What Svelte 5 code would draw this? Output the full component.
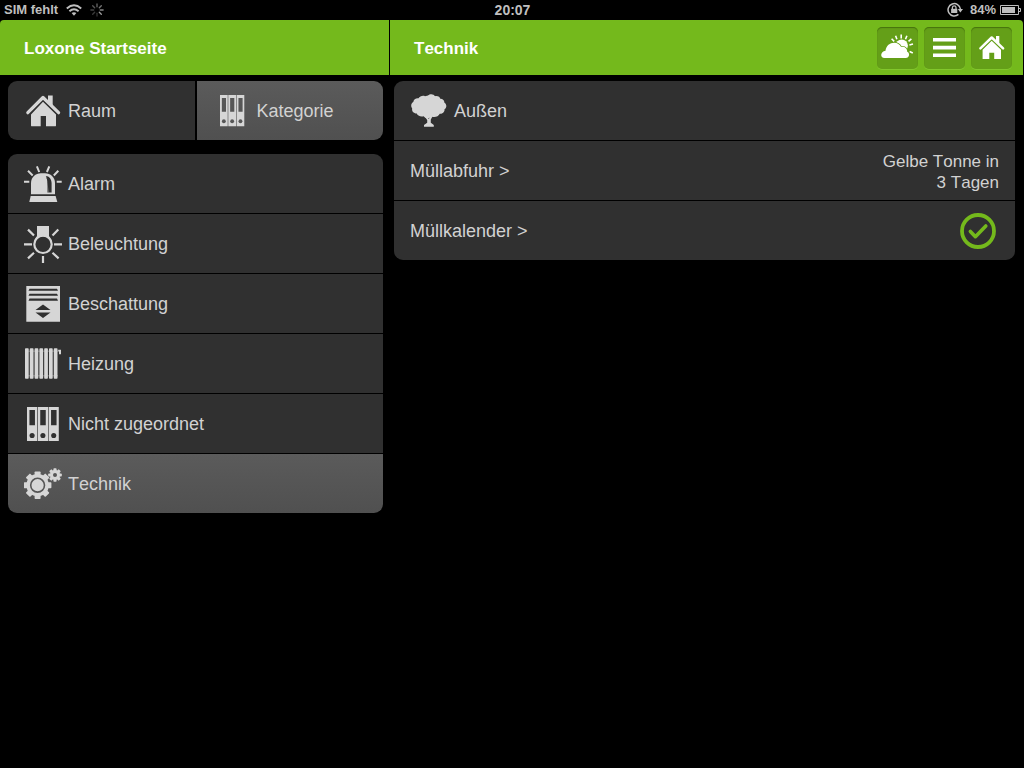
<script>
  /**
   * @typedef {{ id: string, label: string, icon: string }} Entry
   */

  /** @type {Entry[]} */
  const tabs = [
    { id: "room", label: "Raum", icon: "house" },
    { id: "category", label: "Kategorie", icon: "folders" },
  ];

  /** @type {Entry[]} */
  const categories = [
    { id: "alarm", label: "Alarm", icon: "alarm" },
    { id: "light", label: "Beleuchtung", icon: "bulb" },
    { id: "shade", label: "Beschattung", icon: "shade" },
    { id: "heating", label: "Heizung", icon: "radiator" },
    { id: "none", label: "Nicht zugeordnet", icon: "binders" },
    { id: "tech", label: "Technik", icon: "gears" },
  ];

  const teeth = [0, 45, 90, 135, 180, 225, 270, 315];
  const spokes = [0.5, 0.6, 0.7, 0.8, 0.25, 0.3, 0.35, 0.45];

  let activeTab = $state("category");
  let activeCategory = $state("tech");

  const title = $derived(categories.find((c) => c.id === activeCategory)?.label);
</script>

{#snippet binderRow(pitch, w, h)}
  {#each [0, 1, 2] as i (i)}
    <g transform="translate({i * pitch} 0)">
      <path
        fill-rule="evenodd"
        d="M0 0H{w}V{h}H0ZM{w * 0.24} 3V{h * 0.54}H{w * 0.78}V3Z"
      />
      <circle class="cut" cx={w / 2} cy={h * 0.84} r={w * 0.25} />
    </g>
  {/each}
{/snippet}

{#snippet gear(cx, cy, body, tip, width)}
  <circle {cx} {cy} r={body} />
  {#each teeth as a (a)}
    <rect
      x={cx - width / 2}
      y={cy - tip}
      {width}
      height={tip}
      rx="0.8"
      transform="rotate({a} {cx} {cy})"
    />
  {/each}
{/snippet}

{#snippet icon(name)}
  <svg class="icon" viewBox="0 0 38 39" aria-hidden="true">
    {#if name === "house"}
      <path d="M24 4.5H28.7V15L24 10.5Z" />
      <path d="M19 10.8L32 23.5V34.4Q32 35.3 31 35.3H22V25H16.7V35.3H8Q7 35.3 7 34.4V23.5Z" />
      <path class="cut-line" d="M3.5 23.9L19 8.6L34.7 23.9" stroke-width="1.8" />
      <path class="line" d="M3.8 21.7L19 6.5L34.6 21.7" stroke-width="3.2" />
    {:else if name === "folders"}
      <g transform="translate(7 4)">{@render binderRow(8.3, 7.7, 31.2)}</g>
    {:else if name === "binders"}
      <g transform="translate(3 3)">{@render binderRow(10.8, 10.2, 34)}</g>
    {:else if name === "alarm"}
      <path d="M7 30.3V19C7 13.5 11.5 9.3 17 9.3H21C26.5 9.3 31 13.5 31 19V30.3Z" />
      <path class="cut" d="M21.8 12C25.2 12.2 27.4 14.8 27.6 19V28.6H24.6L23.2 14.4Z" />
      <path class="edge" d="M22.6 13.6C23.7 15.4 24 17 24 19V28.6" />
      <path d="M6.7 32H31.6L33.3 38H5.3Z" />
      <path
        class="line flat"
        stroke-width="2"
        d="M12.9 2.3L15.2 8M25.3 2.3L22.9 8M4 6.8L8.7 11.5M34.3 6.8L29.8 11.5M0 17.7H5.3M32.7 17.7H37.7"
      />
    {:else if name === "bulb"}
      <path d="M13 2H25V12L27 16H11L13 12Z" />
      <circle class="cut" cx="19" cy="20.3" r="8" />
      <circle class="line" cx="19" cy="20.3" r="8.7" stroke-width="2.2" />
      <path
        class="line flat"
        stroke-width="2.2"
        d="M0 20.3H8M30 20.3H38M4 5.6L10 11.5M34.3 5.6L28.5 11.5M4 34.4L10 28.7M34.6 34.4L28.5 28.7M19 32V39"
      />
    {:else if name === "shade"}
      <path d="M2.3 2H36V37.7H2.3Z" />
      <path
        class="cut"
        d="M5.5 4.8H33L34 6.8H4.5ZM5.5 9.8H33L34 11.8H4.5ZM5.5 14.6H33L34 16.8H4.5ZM19 20.5L26.5 26H11.5ZM11.5 28.5H26.5L19 34Z"
      />
    {:else if name === "radiator"}
      <path d="M2 6.5H34V8H2ZM2 31H34V32.5H2Z" opacity="0.3" />
      {#each [0, 1, 2, 3, 4, 5, 6] as i (i)}
        <rect x={1 + i * 4.8} y="4.3" width="3.7" height="30.4" rx="0.8" />
      {/each}
      <path d="M34.2 5.7H37V10.3H35V7.5H34.2Z" />
    {:else if name === "gears"}
      {@render gear(13.6, 21.2, 11.2, 13.8, 6)}
      <circle class="cut-line" cx="13.6" cy="21.2" r="6.9" stroke-width="1.6" />
      {@render gear(31, 11, 5, 6.8, 3.2)}
      <circle class="cut" cx="31" cy="11" r="2" />
    {:else if name === "tree"}
      <path
        d="M18 4.5C20 2.4 24 3 25 5.2C28 4.6 30 6.2 30.3 7.7C33 7.8 34.5 9.5 34.3 11.4C37.2 13.2 36.8 17 34.5 18.2C35 21 32 23.3 29.8 22.8C28.5 25.6 24.5 26.8 21.8 25.5C19.5 27.7 15.2 27.6 13.6 25.2C10.5 26 7.4 24.6 6.8 22.5C3.5 22.3 1.5 20 2.2 17.4C.6 15.3 1 12 3.3 11C3.5 8.3 6 6.8 8.6 7.2C9.6 5.2 13 4 15 5.2Z"
      />
      <path d="M15 26H17.5L18.8 28L20.5 25H22.8L20.8 28.5V31.8L23.8 34V35.8H14V34L17.2 31.8V29Z" />
    {/if}
  </svg>
{/snippet}

{#snippet row(item, active, onclick)}
  <button type="button" class="row" class:active aria-pressed={active} {onclick}>
    {@render icon(item.icon)}
    <span class="name">{item.label}</span>
  </button>
{/snippet}

<div class="app">
  <div class="status">
    <div class="status-side">
      <span>SIM fehlt</span>
      <svg class="wifi" viewBox="0 0 16 12" aria-hidden="true">
        <path d="M8 11.7L5.6 9.1C7 7.9 9 7.9 10.4 9.1Z" />
        <path class="line flat" stroke-width="2" d="M3.4 7.2Q8 3.2 12.6 7.2M.8 4.4Q8 -1.9 15.2 4.4" />
      </svg>
      <svg class="spinner" viewBox="0 0 14 14" aria-hidden="true">
        {#each spokes as opacity, i (i)}
          <path class="line" stroke-width="1.4" d="M7 .9V3.7" {opacity} transform="rotate({i * 45} 7 7)" />
        {/each}
      </svg>
    </div>
    <time>20:07</time>
    <div class="status-side end">
      <svg class="lock" viewBox="0 0 16 16" aria-hidden="true">
        <path class="line flat" stroke-width="1.5" d="M11.4 12.4A6.2 6.2 0 1 1 13.4 7" />
        <path d="M10.8 7H16L13.4 10.4Z" />
        <path d="M4.1 6.8H10.3V11H4.1Z" />
        <path class="line flat" stroke-width="1.3" d="M5.4 7V5.6A1.8 1.8 0 0 1 9 5.6V7" />
      </svg>
      <span>84%</span>
      <svg class="battery" viewBox="0 0 21 10" aria-hidden="true">
        <path class="line flat" stroke-width="1" d="M.5 .5H18.5V9.5H.5ZM18.5 3.5H20.5V6.5H18.5" />
        <path d="M2 2H15V8H2Z" />
      </svg>
    </div>
  </div>

  <header>
    <div class="bar left">
      <h1>Loxone Startseite</h1>
    </div>
    <div class="bar right">
      <h2>{title}</h2>
      <nav>
        <button type="button" class="tool" aria-label="Wetter">
          <svg viewBox="0 0 41 42" aria-hidden="true">
            <circle cx="24.7" cy="18.6" r="6.2" />
            <path
              class="line flat"
              stroke-width="1.6"
              d="M14.6 11.8L17.2 14.4M18.6 8.8L19.9 12.2M24.2 7.6V11.4M29.9 8.8L28.5 12.2M34.4 11.8L31.5 14.4M36 17L32.4 18M35.8 26L32.6 24.5"
            />
            <path
              class="cloud"
              d="M7.5 31C3 31 3 24.8 8.5 23.8C9 18.6 13 15.7 17.2 15.7C20.6 15.7 22.8 17.4 24 19.8C27.6 19.2 30.4 21.4 30.2 24.8C33.2 26 32.6 31 28.8 31Z"
            />
          </svg>
        </button>
        <button type="button" class="tool" aria-label="Menü">
          <svg viewBox="0 0 41 42" aria-hidden="true">
            <path d="M9 11H32V14.6H9ZM9 18.8H32V22.4H9ZM9 26.4H32V30H9Z" />
          </svg>
        </button>
        <button type="button" class="tool" aria-label="Startseite">
          <svg viewBox="0 0 41 42" aria-hidden="true">
            <path d="M25 9H28.3V17L25 14Z" />
            <path d="M20.7 13.7L30 22.7V32H23.2V25.7H18.3V32H11.6V22.7Z" />
            <path class="tool-cut" d="M9.4 23L20.7 12.3L32.2 23" stroke-width="1.2" />
            <path class="line" d="M9.4 21.3L20.7 10.5L32.1 21.3" stroke-width="2.5" />
          </svg>
        </button>
      </nav>
    </div>
  </header>

  <main>
    <aside>
      <div class="group tabs">
        {#each tabs as tab (tab.id)}
          {@render row(tab, activeTab === tab.id, () => (activeTab = tab.id))}
        {/each}
      </div>
      <div class="group">
        {#each categories as item (item.id)}
          {@render row(item, activeCategory === item.id, () => (activeCategory = item.id))}
        {/each}
      </div>
    </aside>

    <section>
      <div class="group">
        <h3 class="row">
          {@render icon("tree")}
          <span class="name">Außen</span>
        </h3>
        <button type="button" class="row">
          <span class="name">Müllabfuhr &gt;</span>
          <span class="value">Gelbe Tonne in<br />3 Tagen</span>
        </button>
        <button type="button" class="row">
          <span class="name">Müllkalender &gt;</span>
          <svg class="check" viewBox="0 0 42 42" role="img" aria-label="OK">
            <circle class="line" cx="21" cy="21" r="16" stroke-width="3.8" />
            <path class="line" d="M13.4 21.4L18.4 26.7L28.8 16" stroke-width="3.6" />
          </svg>
        </button>
      </div>
    </section>
  </main>
</div>

<style>
  :global(body) {
    background: #000;
  }
  .app {
    min-height: 100vh;
    background: #000;
    color: #d2d2d2;
    font-family: "Liberation Sans", Arial, Helvetica, sans-serif;
    font-kerning: none;
  }
  h1,
  h2,
  h3 {
    margin: 0;
  }
  svg {
    display: block;
    flex: none;
    fill: currentColor;
  }
  .line {
    fill: none;
    stroke: currentColor;
    stroke-linecap: round;
    stroke-linejoin: round;
  }
  .line.flat {
    stroke-linecap: butt;
    stroke-linejoin: miter;
  }

  /* status bar */
  .status {
    display: grid;
    grid-template-columns: 1fr auto 1fr;
    align-items: center;
    height: 20px;
    padding: 0 3px 0 4px;
    color: #bfbfbf;
    font-size: 13px;
    font-weight: bold;
    line-height: 18px;
  }
  .status-side {
    display: flex;
    align-items: center;
    gap: 8px;
  }
  .status-side.end {
    justify-content: flex-end;
    gap: 4px;
  }
  time {
    font-size: 14px;
  }
  .wifi {
    width: 16px;
    height: 12px;
  }
  .spinner {
    width: 14px;
    height: 14px;
  }
  .lock {
    width: 16px;
    height: 16px;
    margin-right: 3px;
  }
  .battery {
    width: 21px;
    height: 10px;
  }

  /* title bars */
  header,
  main {
    display: grid;
    grid-template-columns: 390px 1fr;
  }
  .bar {
    display: flex;
    align-items: center;
    height: 55px;
    margin-right: 1px;
    padding-left: 24px;
    background: #74b91c;
    color: #fff;
  }
  .bar.left {
    border-top-left-radius: 4px;
  }
  .bar.right {
    padding-right: 11px;
    border-top-right-radius: 4px;
  }
  h1,
  h2 {
    flex: 1;
    padding-top: 2px;
    font-size: 17px;
  }
  nav {
    display: flex;
    gap: 6px;
  }
  .tool {
    width: 41px;
    height: 42px;
    padding: 0;
    border: none;
    border-radius: 5px;
    background: #649f18;
    box-shadow:
      inset 0 1px 1px #46720e,
      0 1px 0 #82c72c;
    color: #fff;
    cursor: pointer;
  }
  .cloud {
    stroke: #649f18;
    stroke-width: 1.6;
    paint-order: stroke;
  }
  .tool-cut {
    fill: none;
    stroke: #649f18;
  }

  /* lists */
  aside {
    padding: 6px 7px 0 8px;
  }
  section {
    padding: 6px 9px 0 4px;
  }
  .group {
    display: flex;
    flex-direction: column;
    gap: 1px;
    border-radius: 9px;
    overflow: hidden;
  }
  .group.tabs {
    flex-direction: row;
    gap: 2px;
    margin-bottom: 14px;
  }
  .tabs .row {
    flex: 1;
  }
  .row {
    --surface: #303030;
    display: flex;
    align-items: center;
    gap: 6px;
    min-height: 59px;
    padding: 0 16px;
    border: none;
    background: var(--surface);
    color: inherit;
    font-family: inherit;
    font-size: 18px;
    font-weight: normal;
    font-kerning: inherit;
    line-height: 21px;
    text-align: left;
  }
  button.row {
    cursor: pointer;
  }
  .row.active {
    --surface: #565656;
    background: linear-gradient(#5b5b5b, #505050);
  }
  .icon {
    width: 38px;
    height: 39px;
    color: #d6d6d6;
  }
  .cut {
    fill: var(--surface);
  }
  .cut-line {
    fill: none;
    stroke: var(--surface);
  }
  .edge {
    fill: none;
    stroke: var(--surface);
    stroke-width: 1;
  }
  .name,
  .value {
    padding-top: 2px;
  }
  .name {
    flex: 1;
  }
  .value {
    font-size: 17px;
    text-align: right;
  }
  .check {
    width: 42px;
    height: 42px;
    color: #74b91c;
  }
</style>
